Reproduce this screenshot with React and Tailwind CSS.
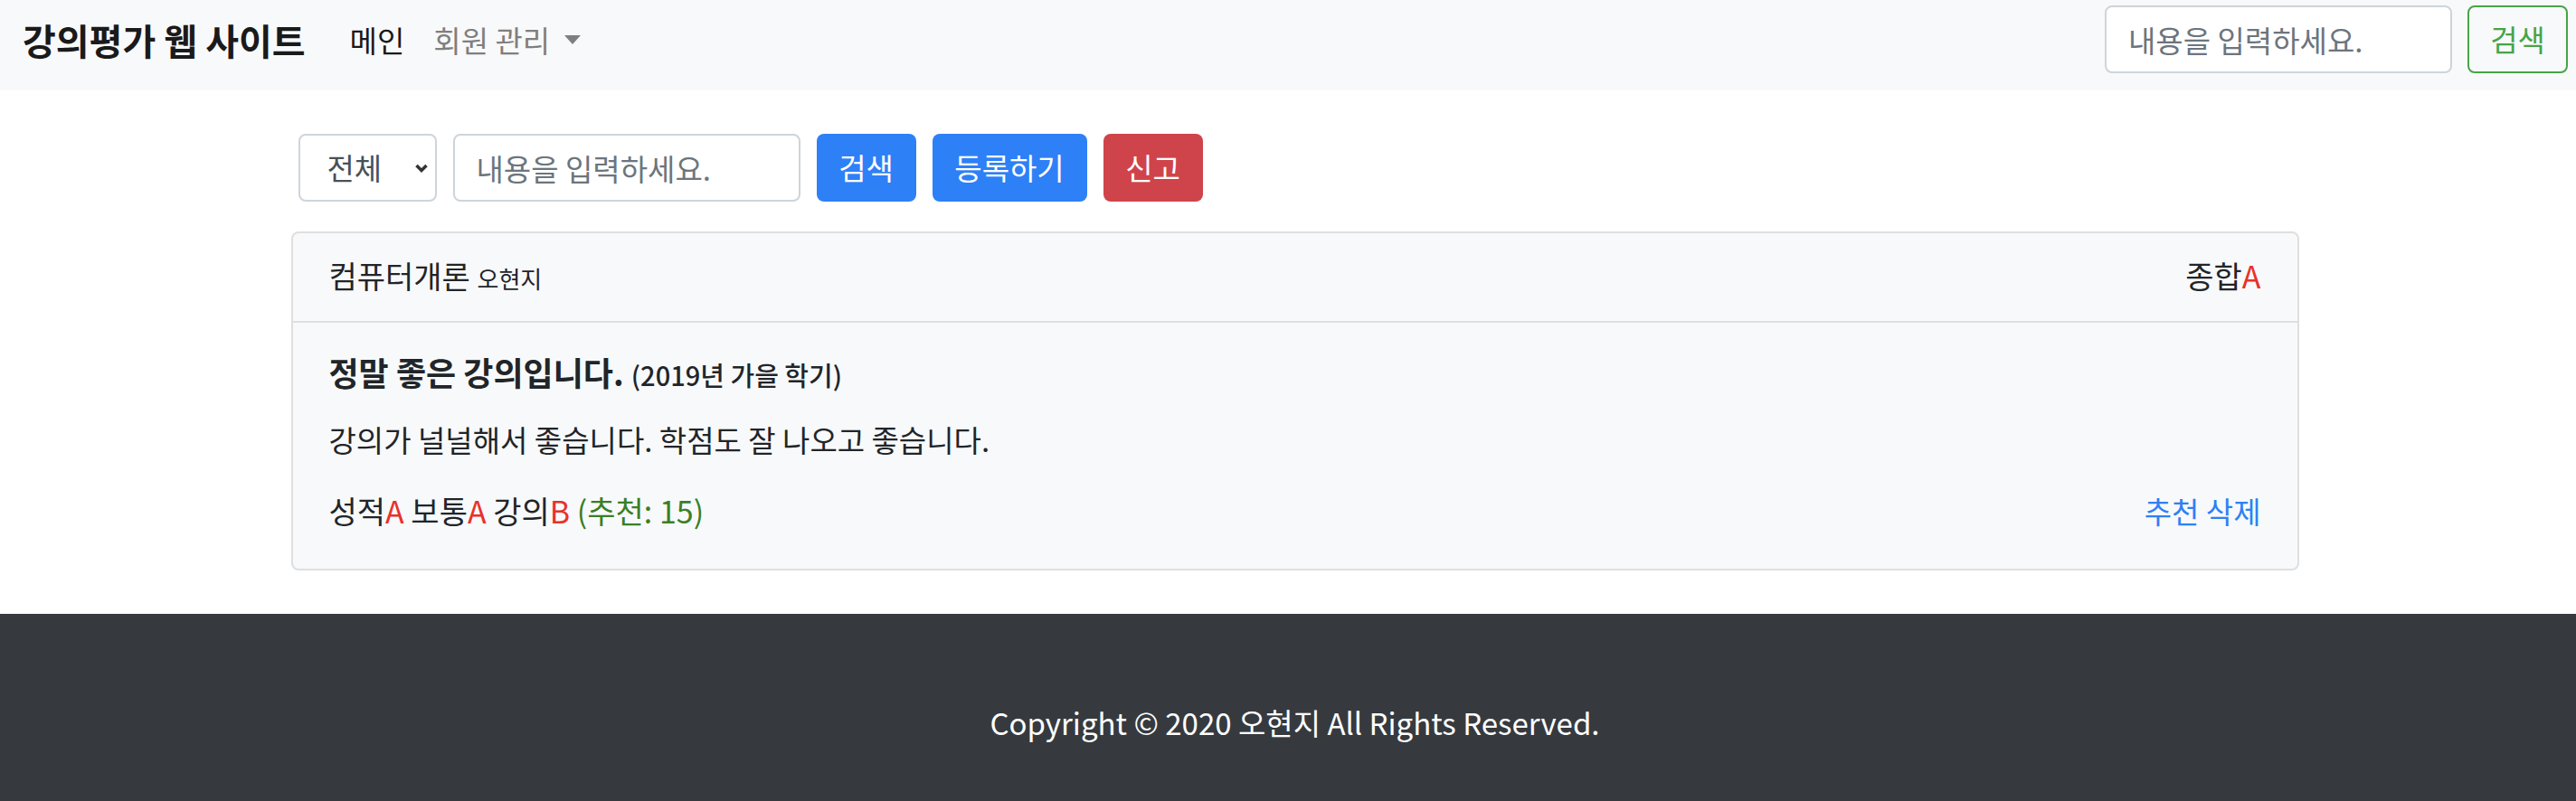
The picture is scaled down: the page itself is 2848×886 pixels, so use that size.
import React from "react";

const FONT = { fontFamily: '"Noto Sans CJK KR", "Noto Sans", sans-serif' };

const Red = ({ children }) => <span className="text-[#e8322b]">{children}</span>;

const Navbar = () => (
  <nav className="h-[100px] bg-[#f8f9fa] flex items-start justify-between pl-[25px] pr-[24px] pt-[6px]">
    <div className="flex items-center h-[75px]">
      <a className="text-[40px] font-bold text-[#1a1a1a] leading-[48px] mr-[33px]">강의평가 웹 사이트</a>
      <a className="px-[16px] text-[33px] leading-[48px] text-[#1a1a1a]">메인</a>
      <a className="px-[16px] text-[33px] leading-[48px] text-[#7f7f80] flex items-center">
        회원 관리
        <span className="ml-[16px] w-0 h-0 border-l-[9px] border-r-[9px] border-t-[10px] border-l-transparent border-r-transparent border-t-[#7f7f80]" />
      </a>
    </div>
    <div className="flex gap-[17px]">
      <input
        className="w-[384px] h-[75px] bg-white border-2 border-[#ced4da] rounded-[8px] px-[24px] text-[33px] text-[#495057] placeholder:text-[#6c757d] outline-none"
        placeholder="내용을 입력하세요."
      />
      <button className="w-[111px] h-[75px] border-2 border-[#47a447] rounded-[8px] text-[33px] text-[#47a447]">검색</button>
    </div>
  </nav>
);

const SearchForm = () => (
  <form className="flex -ml-[1px]">
    <div className="mx-[9px] mt-[16px] w-[153px] h-[75px] bg-white border-2 border-[#ced4da] rounded-[8px] pl-[30px] pr-[7px] flex items-center justify-between text-[33px] text-[#495057]">
      <span>전체</span>
      <svg width="16" height="12" viewBox="0 0 16 12">
        <polyline points="2.5,3 8,8.5 13.5,3" fill="none" stroke="#333" strokeWidth="3.5" />
      </svg>
    </div>
    <input
      className="mx-[9px] mt-[16px] w-[384px] h-[75px] bg-white border-2 border-[#ced4da] rounded-[8px] px-[24px] text-[33px] placeholder:text-[#6c757d] outline-none"
      placeholder="내용을 입력하세요."
    />
    <button type="button" className="mx-[9px] mt-[16px] w-[110px] h-[75px] bg-[#2e80f6] rounded-[8px] text-white text-[33px]">검색</button>
    <button type="button" className="mx-[9px] mt-[16px] w-[171px] h-[75px] bg-[#2e80f6] rounded-[8px] text-white text-[33px]">등록하기</button>
    <button type="button" className="mx-[9px] mt-[16px] w-[110px] h-[75px] bg-[#cf444a] rounded-[8px] text-white text-[33px]">신고</button>
  </form>
);

const ReviewCard = () => (
  <div className="mt-[33px] bg-[#f8f9fa] border-2 border-[#dfdfe0] rounded-[8px] text-[#212529]">
    <div className="px-[40px] py-[23px] border-b-2 border-[#dfdfe0] flex justify-between items-baseline leading-[48px]">
      <div className="text-[34px]">
        컴퓨터개론 <span className="text-[26px]">오현지</span>
      </div>
      <div className="text-[34px]">
        종합<Red>A</Red>
      </div>
    </div>
    <div className="px-[40px] pt-[33px] pb-[40px]">
      <h5 className="text-[36px] font-bold leading-[42px] mb-[27px]">
        정말 좋은 강의입니다. <span className="text-[29px] font-medium">(2019년 가을 학기)</span>
      </h5>
      <p className="text-[33px] leading-[48px] mb-[31px]">강의가 널널해서 좋습니다. 학점도 잘 나오고 좋습니다.</p>
      <div className="flex justify-between text-[34px] leading-[48px]">
        <div>
          성적<Red>A</Red> 보통<Red>A</Red> 강의<Red>B</Red>{" "}
          <span className="text-[#3a7f25]">(추천: 15)</span>
        </div>
        <div className="text-[33px] text-[#2e80f6]">
          <a>추천</a> <a>삭제</a>
        </div>
      </div>
    </div>
  </div>
);

export default function App() {
  return (
    <div className="w-full h-[886px] overflow-hidden bg-white" style={FONT}>
      <div className="w-[2863px]">
        <Navbar />
        <section className="w-[2280px] mx-auto px-[30px] pt-[32px]">
          <SearchForm />
          <ReviewCard />
        </section>
        <footer className="mt-[48px] bg-[#363a3f] py-[96px] text-center text-white text-[33px] leading-[48px]">
          Copyright © 2020 오현지 All Rights Reserved.
        </footer>
      </div>
    </div>
  );
}
